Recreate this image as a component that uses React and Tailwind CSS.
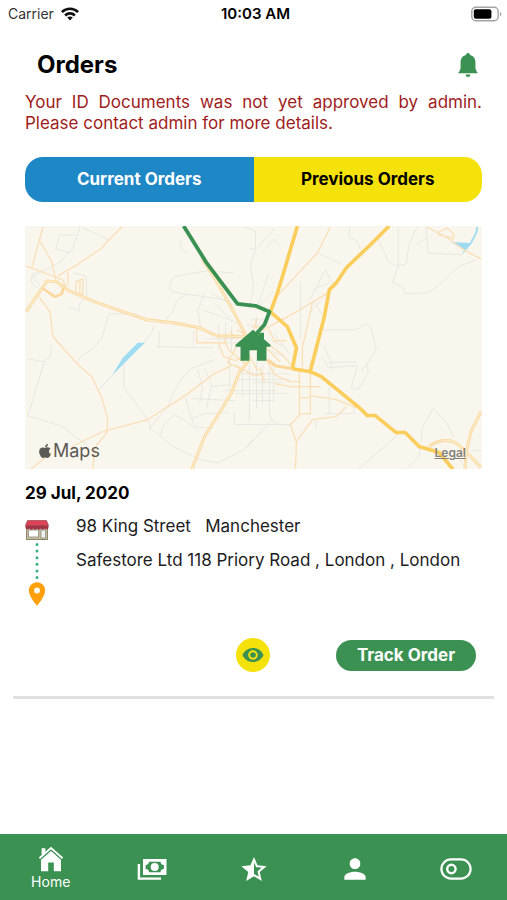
import React, { useState } from "react";
import { IoMdStarHalf, IoMdEye } from "react-icons/io";
import { MdPerson, MdLocationOn } from "react-icons/md";
import { FaApple } from "react-icons/fa";

// --- Icons ---
const WifiIcon = () => (
    <svg viewBox="0 0 20 15" className="w-5 h-4" aria-hidden="true">
        <g fill="none" stroke="#111" strokeWidth="2.6">
            <path d="M1.9 5.6 C6.4 1.1 13.6 1.1 18.1 5.6" />
            <path d="M5.1 9 C7.8 6.2 12.2 6.2 14.9 9" />
        </g>
        <path d="M10 14 L7.2 11.1 C8.8 9.7 11.2 9.7 12.8 11.1 Z" fill="#111" />
    </svg>
);

const BatteryIcon = () => (
    <svg viewBox="0 0 32 15" className="w-8 h-4" aria-hidden="true">
        <rect x="0.8" y="0.8" width="26.4" height="13.4" rx="4" fill="none" stroke="#a3a3a3" strokeWidth="1.4" />
        <rect x="2.8" y="2.8" width="17.6" height="9.4" rx="2" fill="#000" />
        <path d="M29 5.2 C30.8 6 30.8 9 29 9.8 Z" fill="#a3a3a3" />
    </svg>
);

const BellIcon = () => (
    <svg viewBox="0 0 20 24" className="w-5 h-6" fill="currentColor" aria-hidden="true">
        <path d="M10 0 C11.2 0 12 0.8 12 1.9 C15.8 2.8 17.4 5.6 17.4 9.2 V14 C17.4 16.6 18.3 18.2 20 20.3 H0 C1.7 18.2 2.6 16.6 2.6 14 V9.2 C2.6 5.6 4.2 2.8 8 1.9 C8 0.8 8.8 0 10 0 Z" />
        <path d="M7.6 21.5 H12.4 C12.4 23 11.4 24 10 24 C8.6 24 7.6 23 7.6 21.5 Z" />
    </svg>
);

const StoreIcon = () => (
    <svg viewBox="0 0 24 20" className="w-6 h-5" aria-hidden="true">
        <rect x="1.5" y="8" width="21" height="11.5" fill="#c9bd98" stroke="#8b8572" strokeWidth="1" />
        <rect x="3.5" y="10" width="10" height="7" fill="#fff" stroke="#8b8d86" strokeWidth="0.8" />
        <rect x="16" y="10" width="4.5" height="8" fill="#eef3f3" stroke="#8b8d86" strokeWidth="0.8" />
        <path d="M2.5 0.5 H21.5 L23.5 5.5 H0.5 Z" fill="#de4257" stroke="#9b4652" strokeWidth="0.7" />
        <path d="M0.5 5.5 H23.5 V7 a1.9 1.9 0 0 1 -3.8 0.8 a1.9 1.9 0 0 1 -3.8 0 a1.9 1.9 0 0 1 -3.9 0 a1.9 1.9 0 0 1 -3.9 0 a1.9 1.9 0 0 1 -3.8 0 A1.9 1.9 0 0 1 0.5 7 Z" fill="#a33245" />
    </svg>
);

const DottedLine = () => (
    <svg viewBox="0 0 4 38" className="w-1 h-[38px]" aria-hidden="true">
        <path d="M2 2.5 V36" stroke="#35b07e" strokeWidth="3" strokeLinecap="round" strokeDasharray="0 6.6" />
    </svg>
);

const HomeIcon = () => (
    <svg viewBox="0 0 26 26" className="size-[26px]" fill="currentColor" aria-hidden="true">
        <path d="M13 0.8 L25.2 11.6 L24 12.9 L13 3.3 L2 12.9 L0.8 11.6 L3.6 9.1 V2.2 H7.4 V5.7 Z" />
        <path d="M13 5 L23 13.8 V25.2 H15.8 V16.4 H10.2 V25.2 H3 V13.8 Z" />
    </svg>
);

const CashIcon = () => (
    <svg viewBox="0 0 30 22" className="w-[30px] h-[22px]" aria-hidden="true">
        <path d="M1.9 6 V20.6 H24" fill="none" stroke="currentColor" strokeWidth="2.4" />
        <path fill="currentColor" fillRule="evenodd" d="M6 1 H29.5 V17 H6 Z M12 3.8 C12 5.8 10.6 7 8.6 7 V11 C10.6 11 12 12.2 12 14.2 H23.5 C23.5 12.2 24.9 11 26.9 11 V7 C24.9 7 23.5 5.8 23.5 3.8 Z" />
        <circle cx="17.7" cy="9" r="4" fill="currentColor" />
    </svg>
);

const ToggleIcon = () => (
    <svg viewBox="0 0 32 22" className="w-8 h-[22px]" fill="none" stroke="currentColor" aria-hidden="true">
        <rect x="1.4" y="1.4" width="29.2" height="19.2" rx="9.6" strokeWidth="2.2" />
        <circle cx="11.4" cy="11" r="4.2" strokeWidth="2.4" />
    </svg>
);

// --- Map ---
const OrderMap = () => (
    <div className="relative">
        <svg viewBox="0 0 458 244" className="block w-full bg-[#f9f6ee]" fill="none" strokeLinejoin="round" role="img" aria-label="Route map">
            {/* Lanes and boundaries */}
            <g stroke="#e9e7e1" strokeWidth="1">
                <path d="M55 1 L48 22 L34 37 L8 50 M35 9 H50 M35 9 L31 23 L46 27 M58 2 L83 13 V17 M10 46 C5 50 5 58 12 62 M14 44 L8 52 L15 60" />
                <path d="M48 47 L61 50 L62 69 L55 78 L54 85 L43 81 M84 88 H111 L128 96 M84 88 L77 113 L67 124 L56 130 L53 137 M27 119 L25 131 L17 136 L3 133 M20 134 L3 190 M2 190 L15 194 L38 201 L50 211 L62 219" />
                <path d="M209 47 L182 45 L153 50 C144 53 143 62 148 66 L160 68 L207 75 M147 88 L152 75 L162 68 M138 98 L146 88 M180 67 L173 85 L176 101 L187 110 M187 68 L203 76 L211 80 M178 84 L213 97 M190 77 L207 95 M135 106 L134 122 M118 119 L127 106 L130 99" />
                <path d="M157 15 L155 20 L163 27 M220 1 L231 5 V23 L226 40 L229 61 L225 83 M225 23 H232 L250 2 M240 23 L250 13 L255 20 M232 83 L244 48 M249 65 L230 85 M302 69 L286 87 M276 56 V113 M285 75 L301 44 L308 57 M288 64 L306 57 M290 75 L298 90 M293 27 L317 38" />
                <path d="M325 1 V12 L333 15 L336 23 M352 10 L364 35 L372 40 M374 1 V40 L368 57 L379 61 L380 68 L403 67 L414 60 L434 41 L452 34 M393 1 L385 18 L382 38 L373 40 M402 1 L404 27 L438 29 M391 19 L402 12" />
                <path d="M298 104 L332 104 L342 98 L347 102 L352 123 L343 138 L344 147 L334 164 L327 162 L333 140 L304 142 L298 132 M304 137 L332 136 M300 120 L309 144 M342 138 L337 146" />
                <path d="M99 131 V162 L123 194 L126 203 L135 210 L140 198 L150 189 L162 196 L174 206 M132 121 L188 122 M190 134 L166 143 L154 157 L143 181 L124 204 M135 210 L150 222 L178 235 L194 237 L218 225 L240 203 L248 192" />
                <path d="M173 144 L178 161 L175 178 M180 143 L187 159 L182 183 M161 172 L166 190 L170 201 L187 203 M167 173 L210 175 M166 193 L181 188 L204 187 M187 161 L207 159 M205 130 V165 M215 148 H265 M211 154 H266 M198 165 H251 M211 168 H263 M210 187 V199 H266" />
                <path d="M225 139 V196 M232 126 V183 M238 137 V178 M245 144 V190 L250 198 L267 200 M249 139 V175 M218 142 V171 M240 203 L222 222 M229 157 H259 M228 175 H250 M305 161 V188 M300 188 H330 V178 M291 194 L292 203" />
                <path d="M334 244 L382 202 M397 218 L398 202 L409 183 L423 198 L430 212 M383 243 L395 231 L396 221 M447 225 H457 M430 226 L440 240" />
                <path d="M169 105 V123 M194 98 V123 M201 96 V121 M207 100 V127 M181 113 H211 M187 117 H218 M232 91 V107 M226 94 H240 M222 99 H241 M247 115 L260 121 M249 107 L264 127 M239 122 L260 131" />
            </g>
            {/* Water */}
            <g fill="#9fdcf1">
                <path d="M113 117 L120 117 L104 133 L87 150 L98 132 Z" />
                <path d="M427 16 L448 17 L438 29 L440 24 Z" />
            </g>
            <path d="M453 1 C454 7 450 10 447 17" stroke="#9fdcf1" strokeWidth="2" />
            <path d="M87 150 L75 163" stroke="#dde3e2" strokeWidth="1" />
            {/* Local roads */}
            <g stroke="#fbdfb6" strokeWidth="1.3">
                <path d="M97 1 L82 16 L77 22 L52 39 L33 50 M18 1 L7 41 M15 15 L27 36 L31 55 M1 40 L38 54 L42 64" />
                <path d="M17 62 L28 71 L36 68 L39 58 M14 71 L25 86 L28 111 L38 122 L53 139 L67 151 L77 172 L83 194 L82 207 L70 222 L68 244" />
                <path d="M43 46 V60 M51 56 L58 53 V68 H51 Z M55 53 V68 M5 244 L27 227 M47 221 L78 206 L123 194 L162 169 L188 149 L207 140" />
                <path d="M306 1 L293 27 L252 71 M305 66 L272 86 L235 106 M288 77 L278 122 V143 M172 104 V117 H202 M205 106 L213 113" />
                <path d="M275 145 V190 L266 199 L272 217 L271 244 M286 147 V188 H275 M275 172 H286 M250 158 L266 161 H296 M286 170 L312 174 L332 182 M322 181 L312 191 L288 194 L272 216" />
                <path d="M241 132 L250 149 L265 156 H276 M246 120 L258 129 L268 141 M235 142 L240 157 M224 128 L233 145 M212 104 L235 116 L256 136 M232 92 L230 104 M227 101 H237 M195 119 L199 131 L211 135 L219 131 M213 119 L203 137 L218 144" />
                <path d="M199 112 L205 125 L221 138 M211 140 L230 150 L240 148 M244 103 L250 115 H262 M403 1 L425 13 L440 24 L457 33 M413 7 L423 2 L430 8 L428 14 M414 9 L428 12" />
            </g>
            {/* Cased roads */}
            <g stroke="#fbd79c" strokeWidth="3">
                <path d="M1 86 L22 55 L32 56 L42 64 L70 76 L122 94 L148 97 L175 102 L192 110 L220 111" />
                <path d="M17 62 L30 71 L37 68 L39 60" strokeWidth="2.4" />
                <path d="M177 32 L190 52 L208 84 L222 111" />
                <path d="M167 244 L180 211 L195 187 L207 167 L215 146 L225 134" />
                <path d="M405 221 C414 214 426 213 433 218 L442 226 L457 242 M457 186 L447 206 L442 228 L441 244" />
                <path d="M243 134 L251 140 L268 143" />
            </g>
            <g stroke="#fdeecb" strokeWidth="1.2">
                <path d="M1 86 L22 55 L32 56 L42 64 L70 76 L122 94 L148 97 L175 102 L192 110 L220 111" />
                <path d="M177 32 L190 52 L208 84 L222 111" />
                <path d="M167 244 L180 211 L195 187 L207 167 L215 146 L225 134" />
                <path d="M405 221 C414 214 426 213 433 218 L442 226 L457 242 M457 186 L447 206 L442 228 L441 244" />
            </g>
            {/* Highways */}
            <g stroke="#fbcd5b" strokeWidth="3.6">
                <path d="M273 0 L260 44 L253 67 L246 86 L263 101 L272 122 L268 143" />
                <path d="M365 0 L348 17 L322 42 L312 57 L305 64 L300 91 L292 122 L286 145" />
                <path d="M268 143 L286 146 L297 151 L335 182 L343 190 L351 190 L372 207 L381 207 L395 221 L415 227 L429 244" />
            </g>
            {/* Route to destination */}
            <path d="M159 0 L182 37 L213 78 L231 80 L245 86 L240 99 L230 110" stroke="#3a9152" strokeWidth="3.8" />
            <path d="M228.5 104 L246 119 V121 H242 V135 H232.5 V124.5 H225 V135 H216 V121 H211 V119 Z M234.5 107 H239.5 V116 H234.5 Z" fill="#3a9152" />
        </svg>
        <div className="absolute bottom-2 left-3 flex items-center text-[#5c5a55]">
            <FaApple size={16} />
            <span className="text-lg leading-5">Maps</span>
        </div>
        <a href="#legal" className="absolute bottom-2 right-4 text-xs font-semibold text-[#85827b] underline">
            Legal
        </a>
    </div>
);

const TABS = [
    { id: "current", label: "Current Orders", className: "bg-[#1e87c5] text-white" },
    { id: "previous", label: "Previous Orders", className: "bg-[#f6e20b] text-black" },
];

const NAV_ITEMS = [
    { id: "home", label: "Home", icon: <HomeIcon />, showLabel: true },
    { id: "payments", label: "Payments", icon: <CashIcon /> },
    { id: "reviews", label: "Reviews", icon: <IoMdStarHalf size={32} /> },
    { id: "profile", label: "Profile", icon: <MdPerson size={32} /> },
    { id: "status", label: "Status", icon: <ToggleIcon /> },
];

export default function App() {
    const [activeTab, setActiveTab] = useState("current");

    return (
        <div className="min-h-screen flex flex-col bg-white text-black font-['Inter','Liberation_Sans',sans-serif]">
            {/* Status bar */}
            <div className="grid grid-cols-3 items-center h-7 pl-2 pr-1 text-sm">
                <div className="flex items-center gap-1.5 text-[#333]">
                    <span>Carrier</span>
                    <WifiIcon />
                </div>
                <span className="text-center text-[15px] font-semibold">10:03 AM</span>
                <div className="flex justify-end">
                    <BatteryIcon />
                </div>
            </div>

            <main className="flex-1 px-[25px]">
                <header className="flex items-center justify-between pt-[21px] pl-3 pr-1">
                    <h1 className="text-2xl leading-8 font-bold">Orders</h1>
                    <button aria-label="Notifications" className="text-[#3a9152]">
                        <BellIcon />
                    </button>
                </header>

                <p className="mt-[11px] text-justify text-[17px] leading-[21px] text-[#a01c20]">
                    Your ID Documents was not yet approved by admin. Please contact admin for more details.
                </p>

                <div className="mt-[23px] flex h-[45px] overflow-hidden rounded-[18px]">
                    {TABS.map((tab) => (
                        <button
                            key={tab.id}
                            onClick={() => setActiveTab(tab.id)}
                            aria-pressed={activeTab === tab.id}
                            className={`flex-1 text-[17px] font-bold ${tab.className}`}
                        >
                            {tab.label}
                        </button>
                    ))}
                </div>

                <section className="mt-6">
                    <OrderMap />
                    <h2 className="mt-3 text-[17px] leading-6 font-bold">29 Jul, 2020</h2>

                    <div className="mt-[9px] flex gap-[27px]">
                        <div className="flex w-6 flex-col items-center pt-1.5">
                            <StoreIcon />
                            <div className="mt-0.5">
                                <DottedLine />
                            </div>
                            <MdLocationOn size={28} className="text-[#ff9f0a]" />
                        </div>
                        <div className="text-[17px] leading-6 text-[#1c1c1c]">
                            <p className="whitespace-pre-wrap">98 King Street{"   "}Manchester</p>
                            <p className="mt-2.5">Safestore Ltd 118 Priory Road , London , London</p>
                        </div>
                    </div>

                    <div className="mt-[30px] grid grid-cols-3 items-center">
                        <button aria-label="View order" className="col-start-2 flex size-[34px] items-center justify-center justify-self-center rounded-full bg-[#f6e20b] text-[#3a9152]">
                            <IoMdEye size={24} />
                        </button>
                        <button className="mr-1.5 h-[31px] w-[140px] justify-self-end rounded-full bg-[#3a9152] text-[17px] font-bold text-white">
                            Track Order
                        </button>
                    </div>
                </section>

                <hr className="-mx-3 mt-6 border-t-3 border-[#e0e0e0]" />
            </main>

            <nav className="flex h-[66px] bg-[#3a9152] pt-1 text-white">
                {NAV_ITEMS.map((item) => (
                    <a
                        key={item.id}
                        href={`#${item.id}`}
                        aria-label={item.label}
                        className="flex flex-1 flex-col items-center justify-center"
                    >
                        {item.icon}
                        {item.showLabel && <span className="text-sm leading-5">{item.label}</span>}
                    </a>
                ))}
            </nav>
        </div>
    );
}
